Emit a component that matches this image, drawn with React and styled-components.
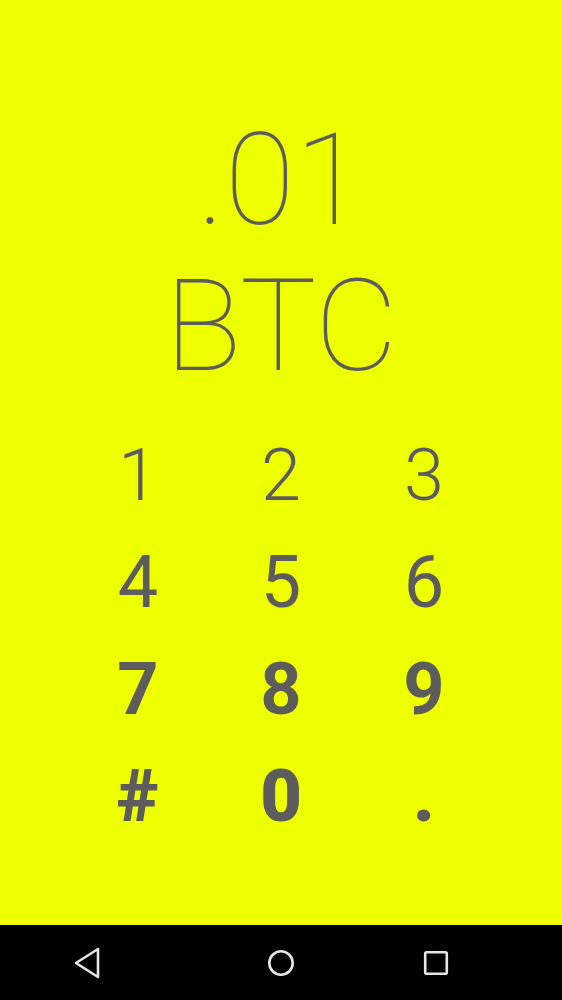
import React from "react";
import styled, { createGlobalStyle } from "styled-components";

const Global = createGlobalStyle`
  html, body { margin: 0; padding: 0; }
  body { background: #eeff00; font-family: Roboto, "Noto Sans", sans-serif; }
`;

const Screen = styled.div`
  width: 562px;
  height: 1000px;
  display: flex;
  flex-direction: column;
  background: #eeff00;
  color: #5c5c5c;
  overflow: hidden;
`;

const Main = styled.main`
  flex: 1;
  display: flex;
  flex-direction: column;
  align-items: center;
  padding-top: 107px;
`;

const Amount = styled.div`
  font-family: Roboto, sans-serif;
  font-weight: 100;
  font-size: 128px;
  line-height: 146px;
  text-align: center;
  width: 100%;
  padding-left: ${(p) => p.$shift || 0}px;
  box-sizing: border-box;
`;

const Keypad = styled.div`
  margin-top: 23px;
  display: grid;
  grid-template-columns: repeat(3, 143px);
  justify-content: center;
`;

const Key = styled.button`
  border: none;
  background: transparent;
  padding: 0;
  color: #5c5c5c;
  font-family: Roboto, sans-serif;
  font-size: 72px;
  line-height: 107px;
  font-weight: ${(p) => p.$weight};
  text-align: center;
`;

const NavBar = styled.nav`
  height: 75px;
  background: #000;
  display: flex;
  align-items: center;
  padding-left: 63px;
`;

const NavButton = styled.div`
  width: 48px;
  height: 48px;
  margin-left: ${(p) => p.$offset || 0}px;
  display: flex;
  align-items: center;
  justify-content: center;
`;

const rows = [
  { w: 300, keys: ["1", "2", "3"] },
  { w: 400, keys: ["4", "5", "6"] },
  { w: 700, keys: ["7", "8", "9"] },
  { w: 900, keys: ["#", "0", "."] },
];

export default function App() {
  return (
    <>
      <Global />
      <Screen>
        <Main>
          <Amount>.01</Amount>
          <Amount>BTC</Amount>
          <Keypad>
            {rows.map((r) =>
              r.keys.map((k) => (
                <Key key={k} $weight={r.w}>
                  {k}
                </Key>
              ))
            )}
          </Keypad>
        </Main>
        <NavBar>
          <NavButton>
            <svg width="30" height="34" viewBox="0 0 30 34">
              <path
                d="M26 3 L26 31 L4 17 Z"
                fill="none"
                stroke="#e6e6e6"
                strokeWidth="2.6"
                strokeLinejoin="round"
              />
            </svg>
          </NavButton>
          <NavButton $offset={146}>
            <svg width="30" height="30" viewBox="0 0 30 30">
              <circle cx="15" cy="15" r="11.7" fill="none" stroke="#e6e6e6" strokeWidth="2.6" />
            </svg>
          </NavButton>
          <NavButton $offset={107}>
            <svg width="28" height="28" viewBox="0 0 28 28">
              <rect x="3.2" y="3.2" width="21.6" height="21.6" rx="1.5" fill="none" stroke="#e6e6e6" strokeWidth="2.6" />
            </svg>
          </NavButton>
        </NavBar>
      </Screen>
    </>
  );
}
